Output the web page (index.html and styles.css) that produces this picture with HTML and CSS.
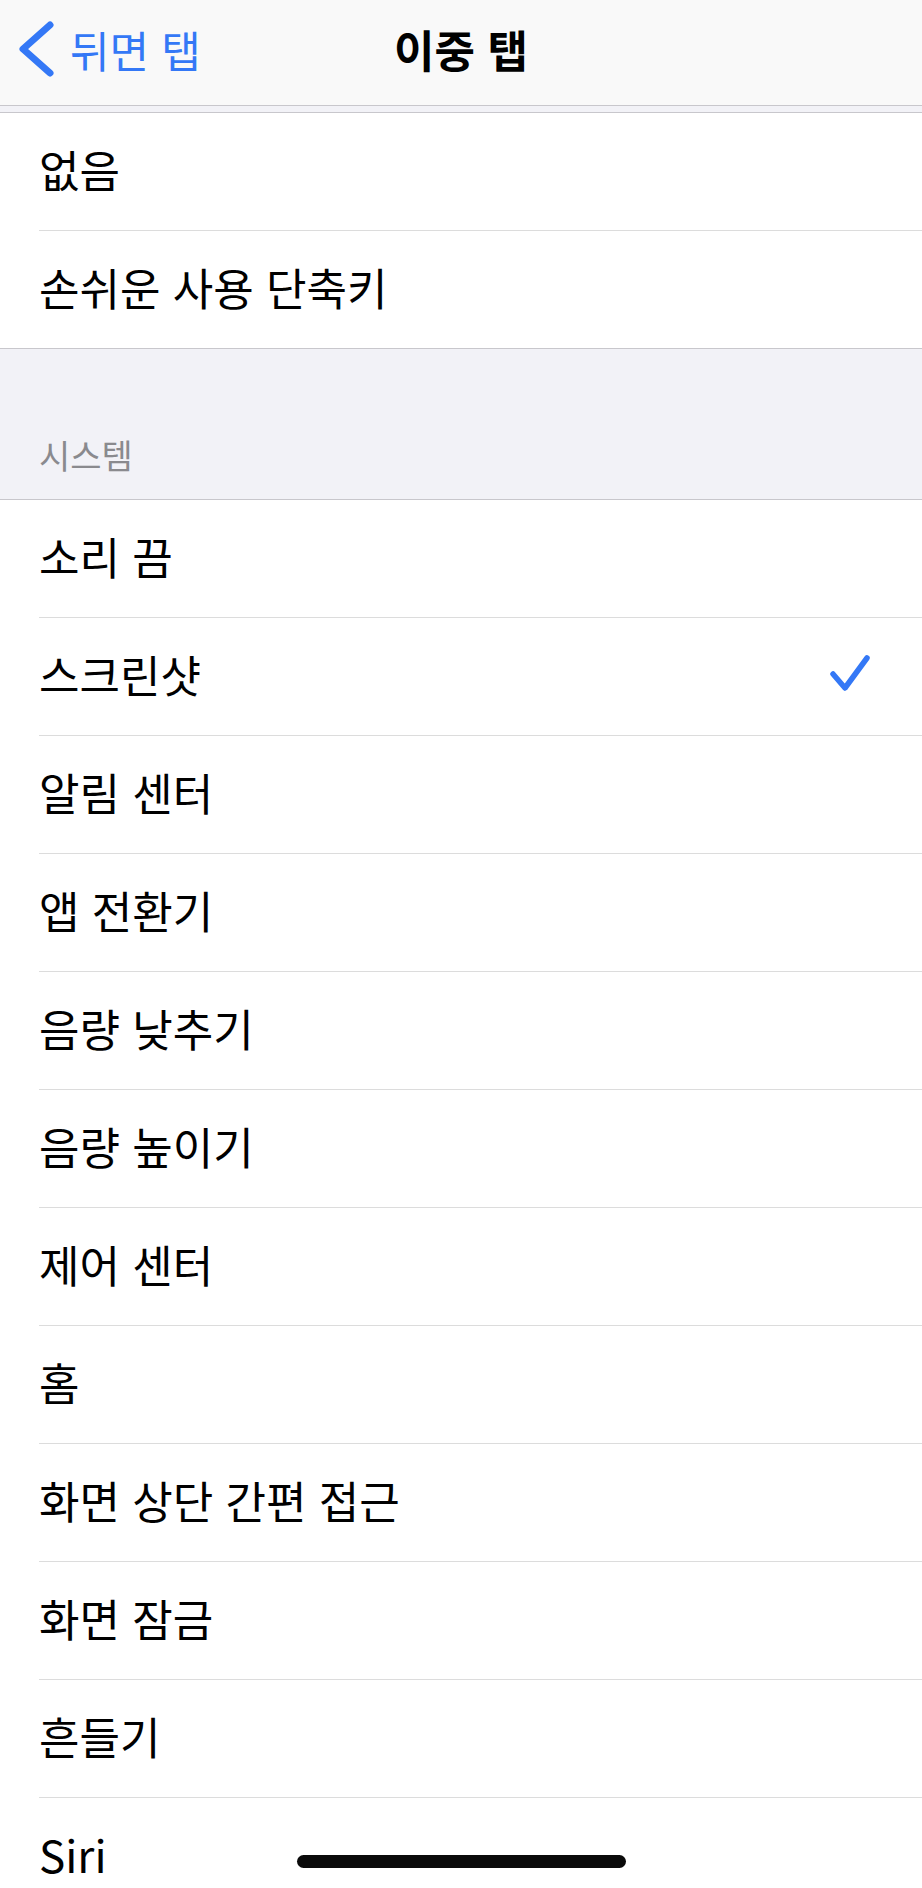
FILE: index.html
```html
<!DOCTYPE html>
<html lang="ko">
<head>
    <meta charset="UTF-8" />
    <meta name="viewport" content="width=device-width, initial-scale=1.0" />
    <title>이중 탭</title>
    <link rel="stylesheet" href="styles.css">
</head>
<body>

    <header class="navbar">
        <a class="back" href="#">
            <svg class="chevron" width="38" height="56" viewBox="0 0 38 56">
                <polyline points="33,4 6,28 33,52" />
            </svg>
            <span>뒤면 탭</span>
        </a>
        <h1 class="title">이중 탭</h1>
        <div></div>
    </header>

    <div class="gap"></div>

    <ul class="group">
        <li class="row">없음</li>
        <li class="row">손쉬운 사용 단축키</li>
    </ul>

    <div class="group-title">시스템</div>

    <ul class="group">
        <li class="row">소리 끔</li>
        <li class="row">스크린샷
            <svg class="check" width="48" height="48" viewBox="0 0 48 48">
                <polyline points="7,24 19,38 41,8" />
            </svg>
        </li>
        <li class="row">알림 센터</li>
        <li class="row">앱 전환기</li>
        <li class="row">음량 낮추기</li>
        <li class="row">음량 높이기</li>
        <li class="row">제어 센터</li>
        <li class="row">홈</li>
        <li class="row">화면 상단 간편 접근</li>
        <li class="row">화면 잠금</li>
        <li class="row">흔들기</li>
        <li class="row">Siri</li>
    </ul>

    <div class="home-indicator"></div>

</body>
</html>
```

FILE: styles.css
```css
:root {
    --blue: #3478f6;
    --bg: #f2f2f7;
    --nav: #f9f9f9;
    --line: #c8c7cc;
    --sep: #dcdcdc;
    --muted: #8a8a8e;
}

* {
    box-sizing: border-box;
}

html, body {
    height: 1888px;
    overflow: hidden;
}

body {
    margin: 0;
    background: var(--bg);
    color: #000;
    font-family: 'Noto Sans CJK KR', 'Noto Sans', sans-serif;
    position: relative;
}

.navbar {
    height: 106px;
    background: var(--nav);
    border-bottom: 1px solid var(--line);
    display: grid;
    grid-template-columns: 1fr auto 1fr;
    align-items: center;
    padding: 0 17px 8px;
}

    .navbar .back {
        display: flex;
        align-items: center;
        gap: 15px;
        color: var(--blue);
        text-decoration: none;
        font-size: 43px;
    }

.chevron polyline {
    fill: none;
    stroke: var(--blue);
    stroke-width: 7;
    stroke-linecap: round;
    stroke-linejoin: round;
}

.title {
    margin: 0;
    font-size: 44px;
    font-weight: 700;
}

.gap {
    height: 6px;
}

.group {
    list-style: none;
    margin: 0;
    padding: 0 0 0 39px;
    background: #fff;
    border-top: 1px solid var(--line);
    border-bottom: 1px solid var(--line);
}

.row {
    height: 118px;
    display: flex;
    align-items: center;
    justify-content: space-between;
    padding: 0 48px 5px 0;
    font-size: 44px;
    border-bottom: 1px solid var(--sep);
}

    .row:last-child {
        border-bottom: none;
        height: 117px;
    }

.check polyline {
    fill: none;
    stroke: var(--blue);
    stroke-width: 5.5;
    stroke-linecap: round;
    stroke-linejoin: round;
}

.group-title {
    height: 150px;
    display: flex;
    align-items: flex-end;
    padding: 0 0 20px 39px;
    color: var(--muted);
    font-size: 34px;
}

.home-indicator {
    position: absolute;
    left: 297px;
    top: 1855px;
    width: 329px;
    height: 13px;
    border-radius: 7px;
    background: #0a0a0a;
}
```
